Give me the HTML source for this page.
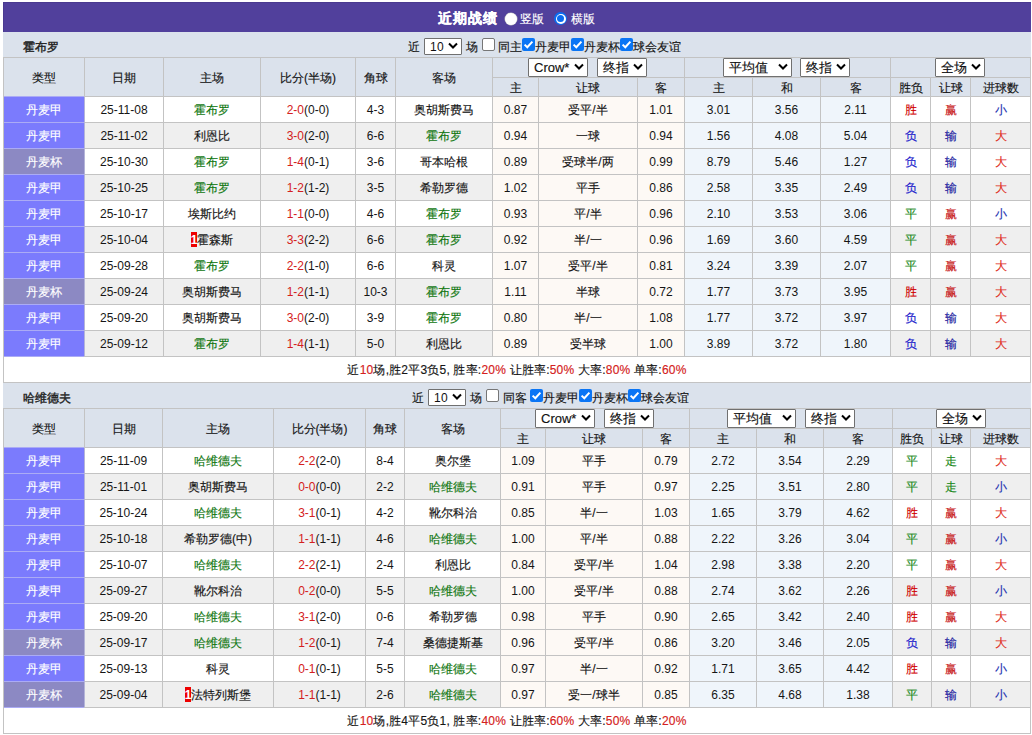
<!DOCTYPE html>
<html><head><meta charset="utf-8"><title>近期战绩</title>
<style>
html,body{margin:0;padding:0;background:#fff;}
body{width:1032px;height:735px;overflow:hidden;position:relative;font-family:"Liberation Sans",sans-serif;font-size:12px;color:#151515;-webkit-text-stroke:0.15px;}
.n{-webkit-text-stroke:0;}
body>div{position:absolute;box-sizing:border-box;}
body>div.t{height:auto;width:auto;white-space:nowrap;}
.c{display:block;width:100%;text-align:center;line-height:25px;white-space:nowrap;position:relative;top:1px;}
.sel{background:#fff;border:1px solid #707070;border-radius:1px;box-sizing:content-box!important;font-size:13px;color:#111;}
.cb{width:13px;height:13px;border-radius:2px;box-sizing:border-box;}
.cb.off{background:#fff;border:1px solid #767676;}
.cb.on{background:#0a75f5;}
</style></head><body>
<div style="left:3px;top:2px;width:1028px;height:30px;background:#51409c;box-shadow:inset 1px 1px 0 #4a3a90;"></div><div class="t" style="left:438px;top:3px;-webkit-text-stroke:0.3px;letter-spacing:1px;font-size:14px;font-weight:bold;color:#fff;line-height:30px;">近期战绩</div><div style="left:504.5px;top:12.5px;width:12px;height:12px;border-radius:50%;background:#fff;box-shadow:0 0 0 0.5px #bbb"></div><div class="t" style="left:520px;top:4px;font-size:12px;color:#fff;line-height:30px;">竖版</div><div style="left:554px;top:12px;width:13px;height:13px;border-radius:50%;background:#0a6cf0;"></div><div style="left:555.5px;top:13.5px;width:10px;height:10px;border-radius:50%;background:#fff;"></div><div style="left:557px;top:15px;width:7px;height:7px;border-radius:50%;background:#0a6cf0;"></div><div class="t" style="left:571px;top:4px;font-size:12px;color:#fff;line-height:30px;">横版</div><div style="left:3px;top:32px;width:1028px;height:25px;background:#dbe2ec;"></div><div class="t" style="left:23px;top:35px;-webkit-text-stroke:0.4px;font-weight:normal;line-height:25px;font-size:12px;color:#222;">霍布罗</div><div class="t" style="left:408px;top:35px;line-height:25px;">近</div><div class="sel" style="left:424px;top:38px;width:36px;height:15px;"><span style="position:absolute;left:5px;top:0;line-height:15px;font-size:12px;letter-spacing:0.4px;top:1px;-webkit-text-stroke:0">10</span><svg style="position:absolute;left:22.5px;top:3px" width="11" height="8" viewBox="0 0 11 8"><path d="M1 1.5 L5 5.5 L9 1.5" fill="none" stroke="#000" stroke-width="2"/></svg></div><div class="t" style="left:466px;top:35px;line-height:25px;">场</div><div class="cb off" style="left:482px;top:38px"></div><div class="t" style="left:498px;top:35px;line-height:25px;">同主</div><div class="cb on" style="left:522px;top:38px"><svg width="13" height="13" viewBox="0 0 13 13" style="position:absolute;left:0;top:0"><path d="M2.6 6.6 L5.3 9.2 L10.4 3.6" fill="none" stroke="#fff" stroke-width="2"/></svg></div><div class="t" style="left:535px;top:35px;line-height:25px;">丹麦甲</div><div class="cb on" style="left:571px;top:38px"><svg width="13" height="13" viewBox="0 0 13 13" style="position:absolute;left:0;top:0"><path d="M2.6 6.6 L5.3 9.2 L10.4 3.6" fill="none" stroke="#fff" stroke-width="2"/></svg></div><div class="t" style="left:584px;top:35px;line-height:25px;">丹麦杯</div><div class="cb on" style="left:620px;top:38px"><svg width="13" height="13" viewBox="0 0 13 13" style="position:absolute;left:0;top:0"><path d="M2.6 6.6 L5.3 9.2 L10.4 3.6" fill="none" stroke="#fff" stroke-width="2"/></svg></div><div class="t" style="left:633px;top:35px;line-height:25px;">球会友谊</div><div style="left:3px;top:57px;width:1028px;height:326px;background:#c3c3c3;"></div><div style="left:4px;top:58px;width:80px;height:38px;background:#dbe2ec;"><span class="c" style="line-height:38px">类型</span></div><div style="left:85px;top:58px;width:78px;height:38px;background:#dbe2ec;"><span class="c" style="line-height:38px">日期</span></div><div style="left:164px;top:58px;width:96px;height:38px;background:#dbe2ec;"><span class="c" style="line-height:38px">主场</span></div><div style="left:261px;top:58px;width:94px;height:38px;background:#dbe2ec;"><span class="c" style="line-height:38px">比分(半场)</span></div><div style="left:356px;top:58px;width:39px;height:38px;background:#dbe2ec;"><span class="c" style="line-height:38px">角球</span></div><div style="left:396px;top:58px;width:96px;height:38px;background:#dbe2ec;"><span class="c" style="line-height:38px">客场</span></div><div style="left:493px;top:58px;width:191px;height:19px;background:#dbe2ec;"></div><div style="left:685px;top:58px;width:205px;height:19px;background:#dbe2ec;"></div><div style="left:891px;top:58px;width:139px;height:19px;background:#dbe2ec;"></div><div style="left:493px;top:78px;width:45px;height:18px;background:#dbe2ec;"><span class="c" style="line-height:18px">主</span></div><div style="left:539px;top:78px;width:98px;height:18px;background:#dbe2ec;"><span class="c" style="line-height:18px">让球</span></div><div style="left:638px;top:78px;width:46px;height:18px;background:#dbe2ec;"><span class="c" style="line-height:18px">客</span></div><div style="left:685px;top:78px;width:67px;height:18px;background:#dbe2ec;"><span class="c" style="line-height:18px">主</span></div><div style="left:753px;top:78px;width:67px;height:18px;background:#dbe2ec;"><span class="c" style="line-height:18px">和</span></div><div style="left:821px;top:78px;width:69px;height:18px;background:#dbe2ec;"><span class="c" style="line-height:18px">客</span></div><div style="left:891px;top:78px;width:39px;height:18px;background:#dbe2ec;"><span class="c" style="line-height:18px">胜负</span></div><div style="left:931px;top:78px;width:39px;height:18px;background:#dbe2ec;"><span class="c" style="line-height:18px">让球</span></div><div style="left:971px;top:78px;width:59px;height:18px;background:#dbe2ec;"><span class="c" style="line-height:18px">进球数</span></div><div class="sel" style="left:528px;top:58px;width:58px;height:17px;"><span style="position:absolute;left:5px;top:0;line-height:17px;">Crow*</span><svg style="position:absolute;left:44.5px;top:4px" width="11" height="8" viewBox="0 0 11 8"><path d="M1 1.5 L5 5.5 L9 1.5" fill="none" stroke="#000" stroke-width="2"/></svg></div><div class="sel" style="left:597px;top:58px;width:48px;height:17px;"><span style="position:absolute;left:5px;top:0;line-height:17px;">终指</span><svg style="position:absolute;left:34.5px;top:4px" width="11" height="8" viewBox="0 0 11 8"><path d="M1 1.5 L5 5.5 L9 1.5" fill="none" stroke="#000" stroke-width="2"/></svg></div><div class="sel" style="left:723px;top:58px;width:67px;height:17px;"><span style="position:absolute;left:5px;top:0;line-height:17px;">平均值</span><svg style="position:absolute;left:53.5px;top:4px" width="11" height="8" viewBox="0 0 11 8"><path d="M1 1.5 L5 5.5 L9 1.5" fill="none" stroke="#000" stroke-width="2"/></svg></div><div class="sel" style="left:800px;top:58px;width:48px;height:17px;"><span style="position:absolute;left:5px;top:0;line-height:17px;">终指</span><svg style="position:absolute;left:34.5px;top:4px" width="11" height="8" viewBox="0 0 11 8"><path d="M1 1.5 L5 5.5 L9 1.5" fill="none" stroke="#000" stroke-width="2"/></svg></div><div class="sel" style="left:935px;top:58px;width:48px;height:17px;"><span style="position:absolute;left:5px;top:0;line-height:17px;">全场</span><svg style="position:absolute;left:34.5px;top:4px" width="11" height="8" viewBox="0 0 11 8"><path d="M1 1.5 L5 5.5 L9 1.5" fill="none" stroke="#000" stroke-width="2"/></svg></div><div style="left:4px;top:96px;width:80px;height:26px;background:#7b7bfd;box-shadow:inset 0 1px 0 #ababf5;"><span class="c" style="line-height:27px;color:#fff">丹麦甲</span></div><div style="left:85px;top:97px;width:78px;height:25px;background:#fff;"><span class="c n">25-11-08</span></div><div style="left:164px;top:97px;width:96px;height:25px;background:#fff;"><span class="c"><span style="color:#0e760e">霍布罗</span></span></div><div style="left:261px;top:97px;width:94px;height:25px;background:#fff;"><span class="c n"><span style="color:#d42020">2-0</span>(0-0)</span></div><div style="left:356px;top:97px;width:39px;height:25px;background:#fff;"><span class="c n">4-3</span></div><div style="left:396px;top:97px;width:96px;height:25px;background:#fff;"><span class="c">奥胡斯费马</span></div><div style="left:493px;top:97px;width:45px;height:25px;background:#fdf9f5;"><span class="c n">0.87</span></div><div style="left:539px;top:97px;width:98px;height:25px;background:#fdf9f5;"><span class="c">受平/半</span></div><div style="left:638px;top:97px;width:46px;height:25px;background:#fdf9f5;"><span class="c n">1.01</span></div><div style="left:685px;top:97px;width:67px;height:25px;background:#eff5fb;"><span class="c n">3.01</span></div><div style="left:753px;top:97px;width:67px;height:25px;background:#eff5fb;"><span class="c n">3.56</span></div><div style="left:821px;top:97px;width:69px;height:25px;background:#eff5fb;"><span class="c n">2.11</span></div><div style="left:891px;top:97px;width:39px;height:25px;background:#fff;"><span class="c"><span style="color:#d00000">胜</span></span></div><div style="left:931px;top:97px;width:39px;height:25px;background:#fff;"><span class="c"><span style="color:#c81818">赢</span></span></div><div style="left:971px;top:97px;width:59px;height:25px;background:#fff;"><span class="c"><span style="color:#2030b0">小</span></span></div><div style="left:4px;top:122px;width:80px;height:26px;background:#7b7bfd;box-shadow:inset 0 1px 0 #ababf5;"><span class="c" style="line-height:27px;color:#fff">丹麦甲</span></div><div style="left:85px;top:123px;width:78px;height:25px;background:#efefef;"><span class="c n">25-11-02</span></div><div style="left:164px;top:123px;width:96px;height:25px;background:#efefef;"><span class="c">利恩比</span></div><div style="left:261px;top:123px;width:94px;height:25px;background:#efefef;"><span class="c n"><span style="color:#d42020">3-0</span>(2-0)</span></div><div style="left:356px;top:123px;width:39px;height:25px;background:#efefef;"><span class="c n">6-6</span></div><div style="left:396px;top:123px;width:96px;height:25px;background:#efefef;"><span class="c"><span style="color:#0e760e">霍布罗</span></span></div><div style="left:493px;top:123px;width:45px;height:25px;background:#fdf9f5;"><span class="c n">0.94</span></div><div style="left:539px;top:123px;width:98px;height:25px;background:#fdf9f5;"><span class="c">一球</span></div><div style="left:638px;top:123px;width:46px;height:25px;background:#fdf9f5;"><span class="c n">0.94</span></div><div style="left:685px;top:123px;width:67px;height:25px;background:#eff5fb;"><span class="c n">1.56</span></div><div style="left:753px;top:123px;width:67px;height:25px;background:#eff5fb;"><span class="c n">4.08</span></div><div style="left:821px;top:123px;width:69px;height:25px;background:#eff5fb;"><span class="c n">5.04</span></div><div style="left:891px;top:123px;width:39px;height:25px;background:#efefef;"><span class="c"><span style="color:#1a1acc">负</span></span></div><div style="left:931px;top:123px;width:39px;height:25px;background:#efefef;"><span class="c"><span style="color:#1a1aa0">输</span></span></div><div style="left:971px;top:123px;width:59px;height:25px;background:#efefef;"><span class="c"><span style="color:#e02a1a">大</span></span></div><div style="left:4px;top:148px;width:80px;height:26px;background:#8c89c3;box-shadow:inset 0 1px 0 #ababf5;"><span class="c" style="line-height:27px;color:#fff">丹麦杯</span></div><div style="left:85px;top:149px;width:78px;height:25px;background:#fff;"><span class="c n">25-10-30</span></div><div style="left:164px;top:149px;width:96px;height:25px;background:#fff;"><span class="c"><span style="color:#0e760e">霍布罗</span></span></div><div style="left:261px;top:149px;width:94px;height:25px;background:#fff;"><span class="c n"><span style="color:#d42020">1-4</span>(0-1)</span></div><div style="left:356px;top:149px;width:39px;height:25px;background:#fff;"><span class="c n">3-6</span></div><div style="left:396px;top:149px;width:96px;height:25px;background:#fff;"><span class="c">哥本哈根</span></div><div style="left:493px;top:149px;width:45px;height:25px;background:#fdf9f5;"><span class="c n">0.89</span></div><div style="left:539px;top:149px;width:98px;height:25px;background:#fdf9f5;"><span class="c">受球半/两</span></div><div style="left:638px;top:149px;width:46px;height:25px;background:#fdf9f5;"><span class="c n">0.99</span></div><div style="left:685px;top:149px;width:67px;height:25px;background:#eff5fb;"><span class="c n">8.79</span></div><div style="left:753px;top:149px;width:67px;height:25px;background:#eff5fb;"><span class="c n">5.46</span></div><div style="left:821px;top:149px;width:69px;height:25px;background:#eff5fb;"><span class="c n">1.27</span></div><div style="left:891px;top:149px;width:39px;height:25px;background:#fff;"><span class="c"><span style="color:#1a1acc">负</span></span></div><div style="left:931px;top:149px;width:39px;height:25px;background:#fff;"><span class="c"><span style="color:#1a1aa0">输</span></span></div><div style="left:971px;top:149px;width:59px;height:25px;background:#fff;"><span class="c"><span style="color:#e02a1a">大</span></span></div><div style="left:4px;top:174px;width:80px;height:26px;background:#7b7bfd;box-shadow:inset 0 1px 0 #ababf5;"><span class="c" style="line-height:27px;color:#fff">丹麦甲</span></div><div style="left:85px;top:175px;width:78px;height:25px;background:#efefef;"><span class="c n">25-10-25</span></div><div style="left:164px;top:175px;width:96px;height:25px;background:#efefef;"><span class="c"><span style="color:#0e760e">霍布罗</span></span></div><div style="left:261px;top:175px;width:94px;height:25px;background:#efefef;"><span class="c n"><span style="color:#d42020">1-2</span>(1-2)</span></div><div style="left:356px;top:175px;width:39px;height:25px;background:#efefef;"><span class="c n">3-5</span></div><div style="left:396px;top:175px;width:96px;height:25px;background:#efefef;"><span class="c">希勒罗德</span></div><div style="left:493px;top:175px;width:45px;height:25px;background:#fdf9f5;"><span class="c n">1.02</span></div><div style="left:539px;top:175px;width:98px;height:25px;background:#fdf9f5;"><span class="c">平手</span></div><div style="left:638px;top:175px;width:46px;height:25px;background:#fdf9f5;"><span class="c n">0.86</span></div><div style="left:685px;top:175px;width:67px;height:25px;background:#eff5fb;"><span class="c n">2.58</span></div><div style="left:753px;top:175px;width:67px;height:25px;background:#eff5fb;"><span class="c n">3.35</span></div><div style="left:821px;top:175px;width:69px;height:25px;background:#eff5fb;"><span class="c n">2.49</span></div><div style="left:891px;top:175px;width:39px;height:25px;background:#efefef;"><span class="c"><span style="color:#1a1acc">负</span></span></div><div style="left:931px;top:175px;width:39px;height:25px;background:#efefef;"><span class="c"><span style="color:#1a1aa0">输</span></span></div><div style="left:971px;top:175px;width:59px;height:25px;background:#efefef;"><span class="c"><span style="color:#e02a1a">大</span></span></div><div style="left:4px;top:200px;width:80px;height:26px;background:#7b7bfd;box-shadow:inset 0 1px 0 #ababf5;"><span class="c" style="line-height:27px;color:#fff">丹麦甲</span></div><div style="left:85px;top:201px;width:78px;height:25px;background:#fff;"><span class="c n">25-10-17</span></div><div style="left:164px;top:201px;width:96px;height:25px;background:#fff;"><span class="c">埃斯比约</span></div><div style="left:261px;top:201px;width:94px;height:25px;background:#fff;"><span class="c n"><span style="color:#d42020">1-1</span>(0-0)</span></div><div style="left:356px;top:201px;width:39px;height:25px;background:#fff;"><span class="c n">4-6</span></div><div style="left:396px;top:201px;width:96px;height:25px;background:#fff;"><span class="c"><span style="color:#0e760e">霍布罗</span></span></div><div style="left:493px;top:201px;width:45px;height:25px;background:#fdf9f5;"><span class="c n">0.93</span></div><div style="left:539px;top:201px;width:98px;height:25px;background:#fdf9f5;"><span class="c">平/半</span></div><div style="left:638px;top:201px;width:46px;height:25px;background:#fdf9f5;"><span class="c n">0.96</span></div><div style="left:685px;top:201px;width:67px;height:25px;background:#eff5fb;"><span class="c n">2.10</span></div><div style="left:753px;top:201px;width:67px;height:25px;background:#eff5fb;"><span class="c n">3.53</span></div><div style="left:821px;top:201px;width:69px;height:25px;background:#eff5fb;"><span class="c n">3.06</span></div><div style="left:891px;top:201px;width:39px;height:25px;background:#fff;"><span class="c"><span style="color:#188818">平</span></span></div><div style="left:931px;top:201px;width:39px;height:25px;background:#fff;"><span class="c"><span style="color:#c81818">赢</span></span></div><div style="left:971px;top:201px;width:59px;height:25px;background:#fff;"><span class="c"><span style="color:#2030b0">小</span></span></div><div style="left:4px;top:226px;width:80px;height:26px;background:#7b7bfd;box-shadow:inset 0 1px 0 #ababf5;"><span class="c" style="line-height:27px;color:#fff">丹麦甲</span></div><div style="left:85px;top:227px;width:78px;height:25px;background:#efefef;"><span class="c n">25-10-04</span></div><div style="left:164px;top:227px;width:96px;height:25px;background:#efefef;"><span class="c"><span style="background:#e00;color:#fff;padding:1px 0 0;font-weight:bold;-webkit-text-stroke:0">1</span>霍森斯</span></div><div style="left:261px;top:227px;width:94px;height:25px;background:#efefef;"><span class="c n"><span style="color:#d42020">3-3</span>(2-2)</span></div><div style="left:356px;top:227px;width:39px;height:25px;background:#efefef;"><span class="c n">6-6</span></div><div style="left:396px;top:227px;width:96px;height:25px;background:#efefef;"><span class="c"><span style="color:#0e760e">霍布罗</span></span></div><div style="left:493px;top:227px;width:45px;height:25px;background:#fdf9f5;"><span class="c n">0.92</span></div><div style="left:539px;top:227px;width:98px;height:25px;background:#fdf9f5;"><span class="c">半/一</span></div><div style="left:638px;top:227px;width:46px;height:25px;background:#fdf9f5;"><span class="c n">0.96</span></div><div style="left:685px;top:227px;width:67px;height:25px;background:#eff5fb;"><span class="c n">1.69</span></div><div style="left:753px;top:227px;width:67px;height:25px;background:#eff5fb;"><span class="c n">3.60</span></div><div style="left:821px;top:227px;width:69px;height:25px;background:#eff5fb;"><span class="c n">4.59</span></div><div style="left:891px;top:227px;width:39px;height:25px;background:#efefef;"><span class="c"><span style="color:#188818">平</span></span></div><div style="left:931px;top:227px;width:39px;height:25px;background:#efefef;"><span class="c"><span style="color:#c81818">赢</span></span></div><div style="left:971px;top:227px;width:59px;height:25px;background:#efefef;"><span class="c"><span style="color:#e02a1a">大</span></span></div><div style="left:4px;top:252px;width:80px;height:26px;background:#7b7bfd;box-shadow:inset 0 1px 0 #ababf5;"><span class="c" style="line-height:27px;color:#fff">丹麦甲</span></div><div style="left:85px;top:253px;width:78px;height:25px;background:#fff;"><span class="c n">25-09-28</span></div><div style="left:164px;top:253px;width:96px;height:25px;background:#fff;"><span class="c"><span style="color:#0e760e">霍布罗</span></span></div><div style="left:261px;top:253px;width:94px;height:25px;background:#fff;"><span class="c n"><span style="color:#d42020">2-2</span>(1-0)</span></div><div style="left:356px;top:253px;width:39px;height:25px;background:#fff;"><span class="c n">6-6</span></div><div style="left:396px;top:253px;width:96px;height:25px;background:#fff;"><span class="c">科灵</span></div><div style="left:493px;top:253px;width:45px;height:25px;background:#fdf9f5;"><span class="c n">1.07</span></div><div style="left:539px;top:253px;width:98px;height:25px;background:#fdf9f5;"><span class="c">受平/半</span></div><div style="left:638px;top:253px;width:46px;height:25px;background:#fdf9f5;"><span class="c n">0.81</span></div><div style="left:685px;top:253px;width:67px;height:25px;background:#eff5fb;"><span class="c n">3.24</span></div><div style="left:753px;top:253px;width:67px;height:25px;background:#eff5fb;"><span class="c n">3.39</span></div><div style="left:821px;top:253px;width:69px;height:25px;background:#eff5fb;"><span class="c n">2.07</span></div><div style="left:891px;top:253px;width:39px;height:25px;background:#fff;"><span class="c"><span style="color:#188818">平</span></span></div><div style="left:931px;top:253px;width:39px;height:25px;background:#fff;"><span class="c"><span style="color:#c81818">赢</span></span></div><div style="left:971px;top:253px;width:59px;height:25px;background:#fff;"><span class="c"><span style="color:#e02a1a">大</span></span></div><div style="left:4px;top:278px;width:80px;height:26px;background:#8c89c3;box-shadow:inset 0 1px 0 #ababf5;"><span class="c" style="line-height:27px;color:#fff">丹麦杯</span></div><div style="left:85px;top:279px;width:78px;height:25px;background:#efefef;"><span class="c n">25-09-24</span></div><div style="left:164px;top:279px;width:96px;height:25px;background:#efefef;"><span class="c">奥胡斯费马</span></div><div style="left:261px;top:279px;width:94px;height:25px;background:#efefef;"><span class="c n"><span style="color:#d42020">1-2</span>(1-1)</span></div><div style="left:356px;top:279px;width:39px;height:25px;background:#efefef;"><span class="c n">10-3</span></div><div style="left:396px;top:279px;width:96px;height:25px;background:#efefef;"><span class="c"><span style="color:#0e760e">霍布罗</span></span></div><div style="left:493px;top:279px;width:45px;height:25px;background:#fdf9f5;"><span class="c n">1.11</span></div><div style="left:539px;top:279px;width:98px;height:25px;background:#fdf9f5;"><span class="c">半球</span></div><div style="left:638px;top:279px;width:46px;height:25px;background:#fdf9f5;"><span class="c n">0.72</span></div><div style="left:685px;top:279px;width:67px;height:25px;background:#eff5fb;"><span class="c n">1.77</span></div><div style="left:753px;top:279px;width:67px;height:25px;background:#eff5fb;"><span class="c n">3.73</span></div><div style="left:821px;top:279px;width:69px;height:25px;background:#eff5fb;"><span class="c n">3.95</span></div><div style="left:891px;top:279px;width:39px;height:25px;background:#efefef;"><span class="c"><span style="color:#d00000">胜</span></span></div><div style="left:931px;top:279px;width:39px;height:25px;background:#efefef;"><span class="c"><span style="color:#c81818">赢</span></span></div><div style="left:971px;top:279px;width:59px;height:25px;background:#efefef;"><span class="c"><span style="color:#e02a1a">大</span></span></div><div style="left:4px;top:304px;width:80px;height:26px;background:#7b7bfd;box-shadow:inset 0 1px 0 #ababf5;"><span class="c" style="line-height:27px;color:#fff">丹麦甲</span></div><div style="left:85px;top:305px;width:78px;height:25px;background:#fff;"><span class="c n">25-09-20</span></div><div style="left:164px;top:305px;width:96px;height:25px;background:#fff;"><span class="c">奥胡斯费马</span></div><div style="left:261px;top:305px;width:94px;height:25px;background:#fff;"><span class="c n"><span style="color:#d42020">3-0</span>(2-0)</span></div><div style="left:356px;top:305px;width:39px;height:25px;background:#fff;"><span class="c n">3-9</span></div><div style="left:396px;top:305px;width:96px;height:25px;background:#fff;"><span class="c"><span style="color:#0e760e">霍布罗</span></span></div><div style="left:493px;top:305px;width:45px;height:25px;background:#fdf9f5;"><span class="c n">0.80</span></div><div style="left:539px;top:305px;width:98px;height:25px;background:#fdf9f5;"><span class="c">半/一</span></div><div style="left:638px;top:305px;width:46px;height:25px;background:#fdf9f5;"><span class="c n">1.08</span></div><div style="left:685px;top:305px;width:67px;height:25px;background:#eff5fb;"><span class="c n">1.77</span></div><div style="left:753px;top:305px;width:67px;height:25px;background:#eff5fb;"><span class="c n">3.72</span></div><div style="left:821px;top:305px;width:69px;height:25px;background:#eff5fb;"><span class="c n">3.97</span></div><div style="left:891px;top:305px;width:39px;height:25px;background:#fff;"><span class="c"><span style="color:#1a1acc">负</span></span></div><div style="left:931px;top:305px;width:39px;height:25px;background:#fff;"><span class="c"><span style="color:#1a1aa0">输</span></span></div><div style="left:971px;top:305px;width:59px;height:25px;background:#fff;"><span class="c"><span style="color:#e02a1a">大</span></span></div><div style="left:4px;top:330px;width:80px;height:26px;background:#7b7bfd;box-shadow:inset 0 1px 0 #ababf5;"><span class="c" style="line-height:27px;color:#fff">丹麦甲</span></div><div style="left:85px;top:331px;width:78px;height:25px;background:#efefef;"><span class="c n">25-09-12</span></div><div style="left:164px;top:331px;width:96px;height:25px;background:#efefef;"><span class="c"><span style="color:#0e760e">霍布罗</span></span></div><div style="left:261px;top:331px;width:94px;height:25px;background:#efefef;"><span class="c n"><span style="color:#d42020">1-4</span>(1-1)</span></div><div style="left:356px;top:331px;width:39px;height:25px;background:#efefef;"><span class="c n">5-0</span></div><div style="left:396px;top:331px;width:96px;height:25px;background:#efefef;"><span class="c">利恩比</span></div><div style="left:493px;top:331px;width:45px;height:25px;background:#fdf9f5;"><span class="c n">0.89</span></div><div style="left:539px;top:331px;width:98px;height:25px;background:#fdf9f5;"><span class="c">受半球</span></div><div style="left:638px;top:331px;width:46px;height:25px;background:#fdf9f5;"><span class="c n">1.00</span></div><div style="left:685px;top:331px;width:67px;height:25px;background:#eff5fb;"><span class="c n">3.89</span></div><div style="left:753px;top:331px;width:67px;height:25px;background:#eff5fb;"><span class="c n">3.72</span></div><div style="left:821px;top:331px;width:69px;height:25px;background:#eff5fb;"><span class="c n">1.80</span></div><div style="left:891px;top:331px;width:39px;height:25px;background:#efefef;"><span class="c"><span style="color:#1a1acc">负</span></span></div><div style="left:931px;top:331px;width:39px;height:25px;background:#efefef;"><span class="c"><span style="color:#1a1aa0">输</span></span></div><div style="left:971px;top:331px;width:59px;height:25px;background:#efefef;"><span class="c"><span style="color:#e02a1a">大</span></span></div><div style="left:4px;top:356px;width:80px;height:1px;background:#ababf5"></div><div style="left:84px;top:97px;width:1px;height:259px;background:#b4b4d8"></div><div style="left:4px;top:357px;width:1026px;height:25px;background:#fff;"><span class="c" style="letter-spacing:0.2px">近<span style="color:#d42020">10</span>场,胜2平3负5, 胜率:<span style="color:#d42020">20%</span> 让胜率:<span style="color:#d42020">50%</span> 大率:<span style="color:#d42020">80%</span> 单率:<span style="color:#d42020">60%</span></span></div><div style="left:3px;top:383px;width:1028px;height:25px;background:#dbe2ec;"></div><div class="t" style="left:23px;top:386px;-webkit-text-stroke:0.4px;font-weight:normal;line-height:25px;font-size:12px;color:#222;">哈维德夫</div><div class="t" style="left:412px;top:386px;line-height:25px;">近</div><div class="sel" style="left:428px;top:389px;width:36px;height:15px;"><span style="position:absolute;left:5px;top:0;line-height:15px;font-size:12px;letter-spacing:0.4px;top:1px;-webkit-text-stroke:0">10</span><svg style="position:absolute;left:22.5px;top:3px" width="11" height="8" viewBox="0 0 11 8"><path d="M1 1.5 L5 5.5 L9 1.5" fill="none" stroke="#000" stroke-width="2"/></svg></div><div class="t" style="left:470px;top:386px;line-height:25px;">场</div><div class="cb off" style="left:486px;top:389px"></div><div class="t" style="left:503px;top:386px;line-height:25px;">同客</div><div class="cb on" style="left:530px;top:389px"><svg width="13" height="13" viewBox="0 0 13 13" style="position:absolute;left:0;top:0"><path d="M2.6 6.6 L5.3 9.2 L10.4 3.6" fill="none" stroke="#fff" stroke-width="2"/></svg></div><div class="t" style="left:543px;top:386px;line-height:25px;">丹麦甲</div><div class="cb on" style="left:579px;top:389px"><svg width="13" height="13" viewBox="0 0 13 13" style="position:absolute;left:0;top:0"><path d="M2.6 6.6 L5.3 9.2 L10.4 3.6" fill="none" stroke="#fff" stroke-width="2"/></svg></div><div class="t" style="left:592px;top:386px;line-height:25px;">丹麦杯</div><div class="cb on" style="left:628px;top:389px"><svg width="13" height="13" viewBox="0 0 13 13" style="position:absolute;left:0;top:0"><path d="M2.6 6.6 L5.3 9.2 L10.4 3.6" fill="none" stroke="#fff" stroke-width="2"/></svg></div><div class="t" style="left:641px;top:386px;line-height:25px;">球会友谊</div><div style="left:3px;top:408px;width:1028px;height:326px;background:#c3c3c3;"></div><div style="left:4px;top:409px;width:80px;height:38px;background:#dbe2ec;"><span class="c" style="line-height:38px">类型</span></div><div style="left:85px;top:409px;width:77px;height:38px;background:#dbe2ec;"><span class="c" style="line-height:38px">日期</span></div><div style="left:163px;top:409px;width:110px;height:38px;background:#dbe2ec;"><span class="c" style="line-height:38px">主场</span></div><div style="left:274px;top:409px;width:91px;height:38px;background:#dbe2ec;"><span class="c" style="line-height:38px">比分(半场)</span></div><div style="left:366px;top:409px;width:38px;height:38px;background:#dbe2ec;"><span class="c" style="line-height:38px">角球</span></div><div style="left:405px;top:409px;width:95px;height:38px;background:#dbe2ec;"><span class="c" style="line-height:38px">客场</span></div><div style="left:501px;top:409px;width:188px;height:19px;background:#dbe2ec;"></div><div style="left:690px;top:409px;width:202px;height:19px;background:#dbe2ec;"></div><div style="left:893px;top:409px;width:137px;height:19px;background:#dbe2ec;"></div><div style="left:501px;top:429px;width:44px;height:18px;background:#dbe2ec;"><span class="c" style="line-height:18px">主</span></div><div style="left:546px;top:429px;width:96px;height:18px;background:#dbe2ec;"><span class="c" style="line-height:18px">让球</span></div><div style="left:643px;top:429px;width:46px;height:18px;background:#dbe2ec;"><span class="c" style="line-height:18px">客</span></div><div style="left:690px;top:429px;width:66px;height:18px;background:#dbe2ec;"><span class="c" style="line-height:18px">主</span></div><div style="left:757px;top:429px;width:66px;height:18px;background:#dbe2ec;"><span class="c" style="line-height:18px">和</span></div><div style="left:824px;top:429px;width:68px;height:18px;background:#dbe2ec;"><span class="c" style="line-height:18px">客</span></div><div style="left:893px;top:429px;width:38px;height:18px;background:#dbe2ec;"><span class="c" style="line-height:18px">胜负</span></div><div style="left:932px;top:429px;width:38px;height:18px;background:#dbe2ec;"><span class="c" style="line-height:18px">让球</span></div><div style="left:971px;top:429px;width:59px;height:18px;background:#dbe2ec;"><span class="c" style="line-height:18px">进球数</span></div><div class="sel" style="left:535px;top:409px;width:58px;height:17px;"><span style="position:absolute;left:5px;top:0;line-height:17px;">Crow*</span><svg style="position:absolute;left:44.5px;top:4px" width="11" height="8" viewBox="0 0 11 8"><path d="M1 1.5 L5 5.5 L9 1.5" fill="none" stroke="#000" stroke-width="2"/></svg></div><div class="sel" style="left:604px;top:409px;width:48px;height:17px;"><span style="position:absolute;left:5px;top:0;line-height:17px;">终指</span><svg style="position:absolute;left:34.5px;top:4px" width="11" height="8" viewBox="0 0 11 8"><path d="M1 1.5 L5 5.5 L9 1.5" fill="none" stroke="#000" stroke-width="2"/></svg></div><div class="sel" style="left:727px;top:409px;width:67px;height:17px;"><span style="position:absolute;left:5px;top:0;line-height:17px;">平均值</span><svg style="position:absolute;left:53.5px;top:4px" width="11" height="8" viewBox="0 0 11 8"><path d="M1 1.5 L5 5.5 L9 1.5" fill="none" stroke="#000" stroke-width="2"/></svg></div><div class="sel" style="left:805px;top:409px;width:48px;height:17px;"><span style="position:absolute;left:5px;top:0;line-height:17px;">终指</span><svg style="position:absolute;left:34.5px;top:4px" width="11" height="8" viewBox="0 0 11 8"><path d="M1 1.5 L5 5.5 L9 1.5" fill="none" stroke="#000" stroke-width="2"/></svg></div><div class="sel" style="left:936px;top:409px;width:48px;height:17px;"><span style="position:absolute;left:5px;top:0;line-height:17px;">全场</span><svg style="position:absolute;left:34.5px;top:4px" width="11" height="8" viewBox="0 0 11 8"><path d="M1 1.5 L5 5.5 L9 1.5" fill="none" stroke="#000" stroke-width="2"/></svg></div><div style="left:4px;top:447px;width:80px;height:26px;background:#7b7bfd;box-shadow:inset 0 1px 0 #ababf5;"><span class="c" style="line-height:27px;color:#fff">丹麦甲</span></div><div style="left:85px;top:448px;width:77px;height:25px;background:#fff;"><span class="c n">25-11-09</span></div><div style="left:163px;top:448px;width:110px;height:25px;background:#fff;"><span class="c"><span style="color:#0e760e">哈维德夫</span></span></div><div style="left:274px;top:448px;width:91px;height:25px;background:#fff;"><span class="c n"><span style="color:#d42020">2-2</span>(2-0)</span></div><div style="left:366px;top:448px;width:38px;height:25px;background:#fff;"><span class="c n">8-4</span></div><div style="left:405px;top:448px;width:95px;height:25px;background:#fff;"><span class="c">奥尔堡</span></div><div style="left:501px;top:448px;width:44px;height:25px;background:#fdf9f5;"><span class="c n">1.09</span></div><div style="left:546px;top:448px;width:96px;height:25px;background:#fdf9f5;"><span class="c">平手</span></div><div style="left:643px;top:448px;width:46px;height:25px;background:#fdf9f5;"><span class="c n">0.79</span></div><div style="left:690px;top:448px;width:66px;height:25px;background:#eff5fb;"><span class="c n">2.72</span></div><div style="left:757px;top:448px;width:66px;height:25px;background:#eff5fb;"><span class="c n">3.54</span></div><div style="left:824px;top:448px;width:68px;height:25px;background:#eff5fb;"><span class="c n">2.29</span></div><div style="left:893px;top:448px;width:38px;height:25px;background:#fff;"><span class="c"><span style="color:#188818">平</span></span></div><div style="left:932px;top:448px;width:38px;height:25px;background:#fff;"><span class="c"><span style="color:#188818">走</span></span></div><div style="left:971px;top:448px;width:59px;height:25px;background:#fff;"><span class="c"><span style="color:#e02a1a">大</span></span></div><div style="left:4px;top:473px;width:80px;height:26px;background:#7b7bfd;box-shadow:inset 0 1px 0 #ababf5;"><span class="c" style="line-height:27px;color:#fff">丹麦甲</span></div><div style="left:85px;top:474px;width:77px;height:25px;background:#efefef;"><span class="c n">25-11-01</span></div><div style="left:163px;top:474px;width:110px;height:25px;background:#efefef;"><span class="c">奥胡斯费马</span></div><div style="left:274px;top:474px;width:91px;height:25px;background:#efefef;"><span class="c n"><span style="color:#d42020">0-0</span>(0-0)</span></div><div style="left:366px;top:474px;width:38px;height:25px;background:#efefef;"><span class="c n">2-2</span></div><div style="left:405px;top:474px;width:95px;height:25px;background:#efefef;"><span class="c"><span style="color:#0e760e">哈维德夫</span></span></div><div style="left:501px;top:474px;width:44px;height:25px;background:#fdf9f5;"><span class="c n">0.91</span></div><div style="left:546px;top:474px;width:96px;height:25px;background:#fdf9f5;"><span class="c">平手</span></div><div style="left:643px;top:474px;width:46px;height:25px;background:#fdf9f5;"><span class="c n">0.97</span></div><div style="left:690px;top:474px;width:66px;height:25px;background:#eff5fb;"><span class="c n">2.25</span></div><div style="left:757px;top:474px;width:66px;height:25px;background:#eff5fb;"><span class="c n">3.51</span></div><div style="left:824px;top:474px;width:68px;height:25px;background:#eff5fb;"><span class="c n">2.80</span></div><div style="left:893px;top:474px;width:38px;height:25px;background:#efefef;"><span class="c"><span style="color:#188818">平</span></span></div><div style="left:932px;top:474px;width:38px;height:25px;background:#efefef;"><span class="c"><span style="color:#188818">走</span></span></div><div style="left:971px;top:474px;width:59px;height:25px;background:#efefef;"><span class="c"><span style="color:#2030b0">小</span></span></div><div style="left:4px;top:499px;width:80px;height:26px;background:#7b7bfd;box-shadow:inset 0 1px 0 #ababf5;"><span class="c" style="line-height:27px;color:#fff">丹麦甲</span></div><div style="left:85px;top:500px;width:77px;height:25px;background:#fff;"><span class="c n">25-10-24</span></div><div style="left:163px;top:500px;width:110px;height:25px;background:#fff;"><span class="c"><span style="color:#0e760e">哈维德夫</span></span></div><div style="left:274px;top:500px;width:91px;height:25px;background:#fff;"><span class="c n"><span style="color:#d42020">3-1</span>(0-1)</span></div><div style="left:366px;top:500px;width:38px;height:25px;background:#fff;"><span class="c n">4-2</span></div><div style="left:405px;top:500px;width:95px;height:25px;background:#fff;"><span class="c">靴尔科治</span></div><div style="left:501px;top:500px;width:44px;height:25px;background:#fdf9f5;"><span class="c n">0.85</span></div><div style="left:546px;top:500px;width:96px;height:25px;background:#fdf9f5;"><span class="c">半/一</span></div><div style="left:643px;top:500px;width:46px;height:25px;background:#fdf9f5;"><span class="c n">1.03</span></div><div style="left:690px;top:500px;width:66px;height:25px;background:#eff5fb;"><span class="c n">1.65</span></div><div style="left:757px;top:500px;width:66px;height:25px;background:#eff5fb;"><span class="c n">3.79</span></div><div style="left:824px;top:500px;width:68px;height:25px;background:#eff5fb;"><span class="c n">4.62</span></div><div style="left:893px;top:500px;width:38px;height:25px;background:#fff;"><span class="c"><span style="color:#d00000">胜</span></span></div><div style="left:932px;top:500px;width:38px;height:25px;background:#fff;"><span class="c"><span style="color:#c81818">赢</span></span></div><div style="left:971px;top:500px;width:59px;height:25px;background:#fff;"><span class="c"><span style="color:#e02a1a">大</span></span></div><div style="left:4px;top:525px;width:80px;height:26px;background:#7b7bfd;box-shadow:inset 0 1px 0 #ababf5;"><span class="c" style="line-height:27px;color:#fff">丹麦甲</span></div><div style="left:85px;top:526px;width:77px;height:25px;background:#efefef;"><span class="c n">25-10-18</span></div><div style="left:163px;top:526px;width:110px;height:25px;background:#efefef;"><span class="c">希勒罗德(中)</span></div><div style="left:274px;top:526px;width:91px;height:25px;background:#efefef;"><span class="c n"><span style="color:#d42020">1-1</span>(1-1)</span></div><div style="left:366px;top:526px;width:38px;height:25px;background:#efefef;"><span class="c n">4-6</span></div><div style="left:405px;top:526px;width:95px;height:25px;background:#efefef;"><span class="c"><span style="color:#0e760e">哈维德夫</span></span></div><div style="left:501px;top:526px;width:44px;height:25px;background:#fdf9f5;"><span class="c n">1.00</span></div><div style="left:546px;top:526px;width:96px;height:25px;background:#fdf9f5;"><span class="c">平/半</span></div><div style="left:643px;top:526px;width:46px;height:25px;background:#fdf9f5;"><span class="c n">0.88</span></div><div style="left:690px;top:526px;width:66px;height:25px;background:#eff5fb;"><span class="c n">2.22</span></div><div style="left:757px;top:526px;width:66px;height:25px;background:#eff5fb;"><span class="c n">3.26</span></div><div style="left:824px;top:526px;width:68px;height:25px;background:#eff5fb;"><span class="c n">3.04</span></div><div style="left:893px;top:526px;width:38px;height:25px;background:#efefef;"><span class="c"><span style="color:#188818">平</span></span></div><div style="left:932px;top:526px;width:38px;height:25px;background:#efefef;"><span class="c"><span style="color:#c81818">赢</span></span></div><div style="left:971px;top:526px;width:59px;height:25px;background:#efefef;"><span class="c"><span style="color:#2030b0">小</span></span></div><div style="left:4px;top:551px;width:80px;height:26px;background:#7b7bfd;box-shadow:inset 0 1px 0 #ababf5;"><span class="c" style="line-height:27px;color:#fff">丹麦甲</span></div><div style="left:85px;top:552px;width:77px;height:25px;background:#fff;"><span class="c n">25-10-07</span></div><div style="left:163px;top:552px;width:110px;height:25px;background:#fff;"><span class="c"><span style="color:#0e760e">哈维德夫</span></span></div><div style="left:274px;top:552px;width:91px;height:25px;background:#fff;"><span class="c n"><span style="color:#d42020">2-2</span>(2-1)</span></div><div style="left:366px;top:552px;width:38px;height:25px;background:#fff;"><span class="c n">2-4</span></div><div style="left:405px;top:552px;width:95px;height:25px;background:#fff;"><span class="c">利恩比</span></div><div style="left:501px;top:552px;width:44px;height:25px;background:#fdf9f5;"><span class="c n">0.84</span></div><div style="left:546px;top:552px;width:96px;height:25px;background:#fdf9f5;"><span class="c">受平/半</span></div><div style="left:643px;top:552px;width:46px;height:25px;background:#fdf9f5;"><span class="c n">1.04</span></div><div style="left:690px;top:552px;width:66px;height:25px;background:#eff5fb;"><span class="c n">2.98</span></div><div style="left:757px;top:552px;width:66px;height:25px;background:#eff5fb;"><span class="c n">3.38</span></div><div style="left:824px;top:552px;width:68px;height:25px;background:#eff5fb;"><span class="c n">2.20</span></div><div style="left:893px;top:552px;width:38px;height:25px;background:#fff;"><span class="c"><span style="color:#188818">平</span></span></div><div style="left:932px;top:552px;width:38px;height:25px;background:#fff;"><span class="c"><span style="color:#c81818">赢</span></span></div><div style="left:971px;top:552px;width:59px;height:25px;background:#fff;"><span class="c"><span style="color:#e02a1a">大</span></span></div><div style="left:4px;top:577px;width:80px;height:26px;background:#7b7bfd;box-shadow:inset 0 1px 0 #ababf5;"><span class="c" style="line-height:27px;color:#fff">丹麦甲</span></div><div style="left:85px;top:578px;width:77px;height:25px;background:#efefef;"><span class="c n">25-09-27</span></div><div style="left:163px;top:578px;width:110px;height:25px;background:#efefef;"><span class="c">靴尔科治</span></div><div style="left:274px;top:578px;width:91px;height:25px;background:#efefef;"><span class="c n"><span style="color:#d42020">0-2</span>(0-0)</span></div><div style="left:366px;top:578px;width:38px;height:25px;background:#efefef;"><span class="c n">5-5</span></div><div style="left:405px;top:578px;width:95px;height:25px;background:#efefef;"><span class="c"><span style="color:#0e760e">哈维德夫</span></span></div><div style="left:501px;top:578px;width:44px;height:25px;background:#fdf9f5;"><span class="c n">1.00</span></div><div style="left:546px;top:578px;width:96px;height:25px;background:#fdf9f5;"><span class="c">受平/半</span></div><div style="left:643px;top:578px;width:46px;height:25px;background:#fdf9f5;"><span class="c n">0.88</span></div><div style="left:690px;top:578px;width:66px;height:25px;background:#eff5fb;"><span class="c n">2.74</span></div><div style="left:757px;top:578px;width:66px;height:25px;background:#eff5fb;"><span class="c n">3.62</span></div><div style="left:824px;top:578px;width:68px;height:25px;background:#eff5fb;"><span class="c n">2.26</span></div><div style="left:893px;top:578px;width:38px;height:25px;background:#efefef;"><span class="c"><span style="color:#d00000">胜</span></span></div><div style="left:932px;top:578px;width:38px;height:25px;background:#efefef;"><span class="c"><span style="color:#c81818">赢</span></span></div><div style="left:971px;top:578px;width:59px;height:25px;background:#efefef;"><span class="c"><span style="color:#2030b0">小</span></span></div><div style="left:4px;top:603px;width:80px;height:26px;background:#7b7bfd;box-shadow:inset 0 1px 0 #ababf5;"><span class="c" style="line-height:27px;color:#fff">丹麦甲</span></div><div style="left:85px;top:604px;width:77px;height:25px;background:#fff;"><span class="c n">25-09-20</span></div><div style="left:163px;top:604px;width:110px;height:25px;background:#fff;"><span class="c"><span style="color:#0e760e">哈维德夫</span></span></div><div style="left:274px;top:604px;width:91px;height:25px;background:#fff;"><span class="c n"><span style="color:#d42020">3-1</span>(2-0)</span></div><div style="left:366px;top:604px;width:38px;height:25px;background:#fff;"><span class="c n">0-6</span></div><div style="left:405px;top:604px;width:95px;height:25px;background:#fff;"><span class="c">希勒罗德</span></div><div style="left:501px;top:604px;width:44px;height:25px;background:#fdf9f5;"><span class="c n">0.98</span></div><div style="left:546px;top:604px;width:96px;height:25px;background:#fdf9f5;"><span class="c">平手</span></div><div style="left:643px;top:604px;width:46px;height:25px;background:#fdf9f5;"><span class="c n">0.90</span></div><div style="left:690px;top:604px;width:66px;height:25px;background:#eff5fb;"><span class="c n">2.65</span></div><div style="left:757px;top:604px;width:66px;height:25px;background:#eff5fb;"><span class="c n">3.42</span></div><div style="left:824px;top:604px;width:68px;height:25px;background:#eff5fb;"><span class="c n">2.40</span></div><div style="left:893px;top:604px;width:38px;height:25px;background:#fff;"><span class="c"><span style="color:#d00000">胜</span></span></div><div style="left:932px;top:604px;width:38px;height:25px;background:#fff;"><span class="c"><span style="color:#c81818">赢</span></span></div><div style="left:971px;top:604px;width:59px;height:25px;background:#fff;"><span class="c"><span style="color:#e02a1a">大</span></span></div><div style="left:4px;top:629px;width:80px;height:26px;background:#8c89c3;box-shadow:inset 0 1px 0 #ababf5;"><span class="c" style="line-height:27px;color:#fff">丹麦杯</span></div><div style="left:85px;top:630px;width:77px;height:25px;background:#efefef;"><span class="c n">25-09-17</span></div><div style="left:163px;top:630px;width:110px;height:25px;background:#efefef;"><span class="c"><span style="color:#0e760e">哈维德夫</span></span></div><div style="left:274px;top:630px;width:91px;height:25px;background:#efefef;"><span class="c n"><span style="color:#d42020">1-2</span>(0-1)</span></div><div style="left:366px;top:630px;width:38px;height:25px;background:#efefef;"><span class="c n">7-4</span></div><div style="left:405px;top:630px;width:95px;height:25px;background:#efefef;"><span class="c">桑德捷斯基</span></div><div style="left:501px;top:630px;width:44px;height:25px;background:#fdf9f5;"><span class="c n">0.96</span></div><div style="left:546px;top:630px;width:96px;height:25px;background:#fdf9f5;"><span class="c">受平/半</span></div><div style="left:643px;top:630px;width:46px;height:25px;background:#fdf9f5;"><span class="c n">0.86</span></div><div style="left:690px;top:630px;width:66px;height:25px;background:#eff5fb;"><span class="c n">3.20</span></div><div style="left:757px;top:630px;width:66px;height:25px;background:#eff5fb;"><span class="c n">3.46</span></div><div style="left:824px;top:630px;width:68px;height:25px;background:#eff5fb;"><span class="c n">2.05</span></div><div style="left:893px;top:630px;width:38px;height:25px;background:#efefef;"><span class="c"><span style="color:#1a1acc">负</span></span></div><div style="left:932px;top:630px;width:38px;height:25px;background:#efefef;"><span class="c"><span style="color:#1a1aa0">输</span></span></div><div style="left:971px;top:630px;width:59px;height:25px;background:#efefef;"><span class="c"><span style="color:#e02a1a">大</span></span></div><div style="left:4px;top:655px;width:80px;height:26px;background:#7b7bfd;box-shadow:inset 0 1px 0 #ababf5;"><span class="c" style="line-height:27px;color:#fff">丹麦甲</span></div><div style="left:85px;top:656px;width:77px;height:25px;background:#fff;"><span class="c n">25-09-13</span></div><div style="left:163px;top:656px;width:110px;height:25px;background:#fff;"><span class="c">科灵</span></div><div style="left:274px;top:656px;width:91px;height:25px;background:#fff;"><span class="c n"><span style="color:#d42020">0-1</span>(0-1)</span></div><div style="left:366px;top:656px;width:38px;height:25px;background:#fff;"><span class="c n">5-5</span></div><div style="left:405px;top:656px;width:95px;height:25px;background:#fff;"><span class="c"><span style="color:#0e760e">哈维德夫</span></span></div><div style="left:501px;top:656px;width:44px;height:25px;background:#fdf9f5;"><span class="c n">0.97</span></div><div style="left:546px;top:656px;width:96px;height:25px;background:#fdf9f5;"><span class="c">半/一</span></div><div style="left:643px;top:656px;width:46px;height:25px;background:#fdf9f5;"><span class="c n">0.92</span></div><div style="left:690px;top:656px;width:66px;height:25px;background:#eff5fb;"><span class="c n">1.71</span></div><div style="left:757px;top:656px;width:66px;height:25px;background:#eff5fb;"><span class="c n">3.65</span></div><div style="left:824px;top:656px;width:68px;height:25px;background:#eff5fb;"><span class="c n">4.42</span></div><div style="left:893px;top:656px;width:38px;height:25px;background:#fff;"><span class="c"><span style="color:#d00000">胜</span></span></div><div style="left:932px;top:656px;width:38px;height:25px;background:#fff;"><span class="c"><span style="color:#c81818">赢</span></span></div><div style="left:971px;top:656px;width:59px;height:25px;background:#fff;"><span class="c"><span style="color:#2030b0">小</span></span></div><div style="left:4px;top:681px;width:80px;height:26px;background:#8c89c3;box-shadow:inset 0 1px 0 #ababf5;"><span class="c" style="line-height:27px;color:#fff">丹麦杯</span></div><div style="left:85px;top:682px;width:77px;height:25px;background:#efefef;"><span class="c n">25-09-04</span></div><div style="left:163px;top:682px;width:110px;height:25px;background:#efefef;"><span class="c"><span style="background:#e00;color:#fff;padding:1px 0 0;font-weight:bold;-webkit-text-stroke:0">1</span>法特列斯堡</span></div><div style="left:274px;top:682px;width:91px;height:25px;background:#efefef;"><span class="c n"><span style="color:#d42020">1-1</span>(1-1)</span></div><div style="left:366px;top:682px;width:38px;height:25px;background:#efefef;"><span class="c n">2-6</span></div><div style="left:405px;top:682px;width:95px;height:25px;background:#efefef;"><span class="c"><span style="color:#0e760e">哈维德夫</span></span></div><div style="left:501px;top:682px;width:44px;height:25px;background:#fdf9f5;"><span class="c n">0.97</span></div><div style="left:546px;top:682px;width:96px;height:25px;background:#fdf9f5;"><span class="c">受一/球半</span></div><div style="left:643px;top:682px;width:46px;height:25px;background:#fdf9f5;"><span class="c n">0.85</span></div><div style="left:690px;top:682px;width:66px;height:25px;background:#eff5fb;"><span class="c n">6.35</span></div><div style="left:757px;top:682px;width:66px;height:25px;background:#eff5fb;"><span class="c n">4.68</span></div><div style="left:824px;top:682px;width:68px;height:25px;background:#eff5fb;"><span class="c n">1.38</span></div><div style="left:893px;top:682px;width:38px;height:25px;background:#efefef;"><span class="c"><span style="color:#188818">平</span></span></div><div style="left:932px;top:682px;width:38px;height:25px;background:#efefef;"><span class="c"><span style="color:#1a1aa0">输</span></span></div><div style="left:971px;top:682px;width:59px;height:25px;background:#efefef;"><span class="c"><span style="color:#2030b0">小</span></span></div><div style="left:4px;top:707px;width:80px;height:1px;background:#ababf5"></div><div style="left:84px;top:448px;width:1px;height:259px;background:#b4b4d8"></div><div style="left:4px;top:708px;width:1026px;height:25px;background:#fff;"><span class="c" style="letter-spacing:0.2px">近<span style="color:#d42020">10</span>场,胜4平5负1, 胜率:<span style="color:#d42020">40%</span> 让胜率:<span style="color:#d42020">60%</span> 大率:<span style="color:#d42020">50%</span> 单率:<span style="color:#d42020">20%</span></span></div>
</body></html>
